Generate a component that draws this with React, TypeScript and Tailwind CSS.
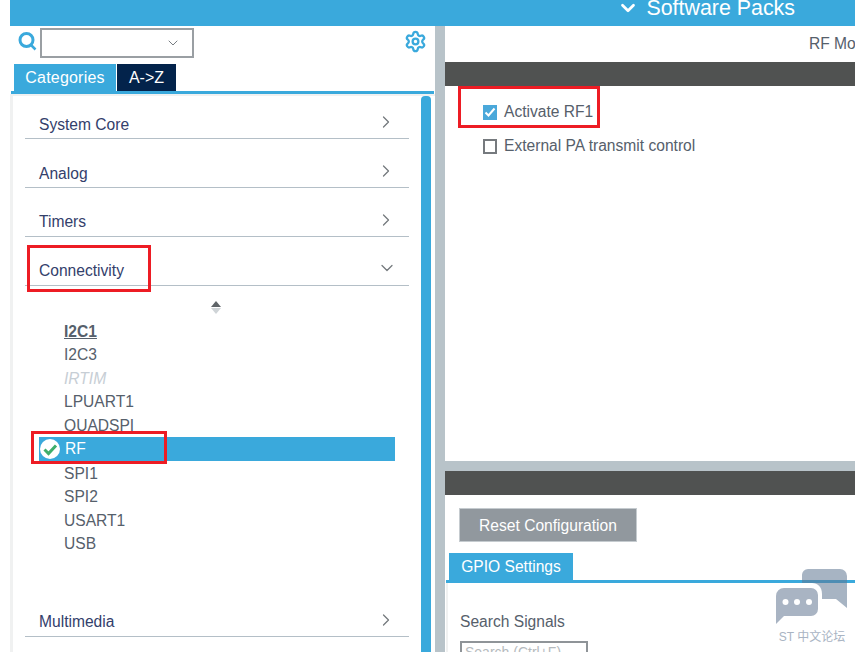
import React from 'react';
import { ChevronDown, ChevronRight, Settings } from 'lucide-react';

const categoriesTop = [
  { name: 'System Core', first: true },
  { name: 'Analog' },
  { name: 'Timers', lift: true },
];

function CategoryRow({ name, open, first, gap, lift }: { name: string; open?: boolean; first?: boolean; gap?: string; lift?: boolean }) {
  return (
    <div
      className={`h-[34px] shrink-0 border-b border-[#b4bfc7] flex items-start justify-between pl-[14px] pr-[16px] ${first ? 'mt-[9px]' : gap || 'mt-[15px]'}`}
    >
      <span className={`text-[15.6px] leading-[18px] text-[#33406b] ${lift ? 'mt-[9.5px]' : 'mt-[10.5px]'}`}>{name}</span>
      {open ? (
        <ChevronDown size={20} strokeWidth={1.5} className="text-[#74797d] mt-[6px] -mr-[4px]" />
      ) : (
        <ChevronRight size={20} strokeWidth={1.5} className="text-[#74797d] mt-[7px] -mr-[3px]" />
      )}
    </div>
  );
}

function PeripheralRow({ children, className }: { children: React.ReactNode; className?: string }) {
  return (
    <div className={`h-[23.6px] pl-[25px] pt-[1.5px] flex items-center text-[15.6px] leading-[18px] text-[#56606b] ${className || ''}`}>
      {children}
    </div>
  );
}

export default function App() {
  return (
    <div className="relative w-[855px] h-[652px] overflow-hidden bg-white font-['Liberation_Sans',Arial,sans-serif]">
      {/* top bar */}
      <div className="ml-[10px] h-[26px] bg-[#3aa9dc] flex justify-end items-start pr-[60px] text-white">
        <ChevronDown size={22} strokeWidth={3} className="-mt-[3px] mr-[7px]" />
        <span className="text-[21.4px] leading-[18px] -mt-[1px]">Software Packs</span>
      </div>

      <div className="flex h-[626px]">
        {/* left panel */}
        <div className="w-[435px] shrink-0 flex flex-col">
          <div className="h-[38px] shrink-0 flex items-start pl-[18px] pr-[8px] pt-[2px]">
            <svg width="20" height="22" viewBox="0 0 20 22" className="mt-[3px] shrink-0">
              <circle cx="8.5" cy="9" r="6.5" fill="none" stroke="#3aa9dc" strokeWidth="3" />
              <path d="M13 14l4.5 4.5" stroke="#3aa9dc" strokeWidth="2.5" />
            </svg>
            <div className="ml-[2px] w-[154px] h-[30px] border-2 border-[#9a9fa3] flex items-center justify-end pr-[11px]">
              <ChevronDown size={16} strokeWidth={1.5} className="text-[#777d82]" />
            </div>
            <Settings size={23} strokeWidth={2.4} className="ml-auto mt-[2px] text-[#3aa9dc]" />
          </div>
          <div className="h-[27px] shrink-0 flex pl-[14px] gap-px text-[16px] text-white">
            <div className="w-[102px] pt-px bg-[#3aa9dc] flex items-center justify-center tracking-[0.2px]">Categories</div>
            <div className="w-[59px] pt-px bg-[#03234b] flex items-center justify-center">A-&gt;Z</div>
          </div>
          <div className="ml-[11px] mr-px h-[3px] shrink-0 bg-[#3aa9dc]" />
          <div className="flex-1 flex min-h-0 ml-[10px] border-l-[3px] border-t-2 border-[#f0f1f1]">
            <div className="w-[408px] shrink-0 px-[12px] flex flex-col">
              {categoriesTop.map((c) => (
                <CategoryRow key={c.name} name={c.name} first={c.first} lift={c.lift} />
              ))}
              <CategoryRow name="Connectivity" open lift />
              <div className="h-[33px] shrink-0 flex flex-col items-center pt-[15px] pr-[2px]">
                <span className="w-0 h-0 border-x-[5px] border-x-transparent border-b-[6px] border-b-[#5f6468]" />
                <span className="w-0 h-0 mt-px border-x-[5px] border-x-transparent border-t-[6px] border-t-[#cfd4d7]" />
              </div>
              <div className="mx-[14px]">
                <PeripheralRow className="font-bold underline text-[#4a4c4f]">I2C1</PeripheralRow>
                <PeripheralRow>I2C3</PeripheralRow>
                <PeripheralRow className="italic text-[#c7ced5]">IRTIM</PeripheralRow>
                <PeripheralRow>LPUART1</PeripheralRow>
                <PeripheralRow>QUADSPI</PeripheralRow>
                <div className="h-[24px] pl-px bg-[#3aa9dc] flex items-center gap-[5px] text-[15.6px] text-white">
                  <svg width="20" height="20" viewBox="0 0 20 20" className="shrink-0">
                    <circle cx="10" cy="10" r="10" fill="#fff" />
                    <path d="M4.5 10.5l4 4 7.5-8" fill="none" stroke="#3fae6b" strokeWidth="3" />
                  </svg>
                  RF
                </div>
                <PeripheralRow>SPI1</PeripheralRow>
                <PeripheralRow>SPI2</PeripheralRow>
                <PeripheralRow>USART1</PeripheralRow>
                <PeripheralRow>USB</PeripheralRow>
              </div>
              <CategoryRow name="Multimedia" gap="mt-[47.6px]" />
            </div>
            <div className="w-[10px] shrink-0 bg-[#3aa9dc] rounded-t-[4px]" />
          </div>
        </div>

        {/* separator */}
        <div className="w-[10px] shrink-0 bg-[#b8c3c9]" />

        {/* right panel */}
        <div className="flex-1 min-w-0 flex flex-col overflow-hidden">
          <div className="h-[36px] shrink-0 pl-[364px] pt-[9px] text-[15.6px] leading-[18px] text-[#56606b] whitespace-nowrap">
            RF Mo
          </div>
          <div className="h-[24px] shrink-0 bg-[#505251]" />
          <div className="h-[375px] shrink-0 pl-[38px] pt-[17px] text-[15.6px] leading-[18px] text-[#56606b]">
            <label className="flex items-center gap-[7px] h-[18px]">
              <span className="w-[14px] h-[15px] bg-[#4aa8da] flex items-center justify-center">
                <svg width="12" height="12" viewBox="0 0 12 12">
                  <path d="M1.5 6.5l3 3 6-7" fill="none" stroke="#fff" strokeWidth="2" />
                </svg>
              </span>
              Activate RF1
            </label>
            <label className="flex items-center gap-[7px] h-[18px] mt-[16px]">
              <span className="w-[14px] h-[15px] border-2 border-[#767a7e] bg-white" />
              External PA transmit control
            </label>
          </div>
          <div className="h-[10px] shrink-0 bg-[#b8c3c9]" />
          <div className="h-[24px] shrink-0 bg-[#505251]" />
          <div className="pt-[13px] pl-[14px]">
            <div className="w-[178px] h-[34px] pt-px bg-[#91989e] border border-[#c5cbcf] text-white text-[15.6px] flex items-center justify-center">
              Reset Configuration
            </div>
          </div>
          <div className="mt-[11px] ml-[4px] w-[124px] h-[27px] shrink-0 bg-[#3aa9dc] text-white text-[15.6px] flex items-center justify-center">
            GPIO Settings
          </div>
          <div className="ml-px h-[3px] shrink-0 bg-[#3aa9dc]" />
          <div className="ml-px border-l-2 border-[#f0f1f1] pl-[12px] pt-[30px]">
            <div className="text-[15.6px] leading-[18px] text-[#56606b]">Search Signals</div>
            <div className="mt-[10px] w-[128px] h-[26px] border-2 border-[#8f9498] pl-[3px] text-[14px] leading-[18px] text-[#b5babd]">
              Search (Ctrl+F)
            </div>
          </div>
        </div>
      </div>

      {/* red annotation boxes */}
      <div className="absolute left-[27px] top-[245px] w-[124px] h-[47px] border-[3px] border-[#ed1c24]" />
      <div className="absolute left-[31px] top-[431px] w-[136px] h-[33px] border-[3px] border-[#ed1c24]" />
      <div className="absolute left-[458px] top-[86px] w-[142px] h-[42px] border-[3px] border-[#ed1c24]" />

      {/* forum watermark */}
      <div className="absolute left-[776px] top-[568px] w-[72px] flex flex-col items-center">
        <svg width="72" height="58" viewBox="0 0 72 58">
          <path
            d="M32 1h32a7 7 0 0 1 7 7v32l-11-9H46v-5c0-7-4-11-10-11H26V7a6 6 0 0 1 6-6z"
            fill="#5f7792"
            fillOpacity="0.55"
          />
          <path
            d="M8 20h27a7 7 0 0 1 7 7v14a7 7 0 0 1-7 7H8L0 56V28a8 8 0 0 1 8-8z"
            fill="#a9b4c3"
          />
          <circle cx="9.5" cy="34" r="3" fill="#fff" />
          <circle cx="21" cy="34" r="3" fill="#fff" />
          <circle cx="33" cy="34" r="3" fill="#fff" />
        </svg>
        <span className="mt-[4px] text-[12px] leading-[14px] text-[#a9b4c3] whitespace-nowrap font-['Liberation_Sans','Noto_Sans_CJK_SC',sans-serif]">
          ST 中文论坛
        </span>
      </div>
    </div>
  );
}
